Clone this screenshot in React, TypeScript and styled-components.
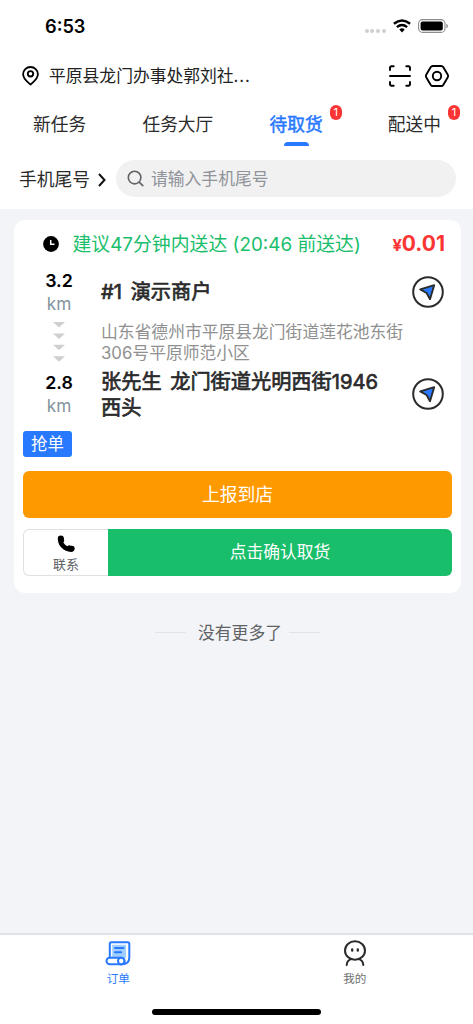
import React from 'react';
import styled, { createGlobalStyle } from 'styled-components';

const GlobalStyle = createGlobalStyle`
  *, *::before, *::after { box-sizing: border-box; }
  body {
    margin: 0;
    background: #f3f4f7;
    font-family: Inter, "Noto Sans CJK SC", sans-serif;
    color: #2b2b2b;
  }
  svg { display: block; flex: none; }
  button { font: inherit; border: 0; padding: 0; background: none; color: inherit; }
`;

const Screen = styled.div`
  display: flex;
  flex-direction: column;
  width: 473px;
  height: 1024px;
  overflow: hidden;
  background: #f3f4f7;
`;

const Header = styled.header`
  flex: none;
  height: 209px;
  background: #fff;
`;

const StatusBar = styled.div`
  display: flex;
  align-items: center;
  justify-content: space-between;
  height: 52px;
  padding: 0 24px 0 45px;
`;

const Clock = styled.span`
  font-size: 18.2px;
  font-weight: 600;
  color: #000;
`;

const StatusIcons = styled.div`
  display: flex;
  align-items: center;
  gap: 7px;
`;

const SignalDots = styled.div`
  display: flex;
  gap: 1.8px;
  padding-top: 9px;
  i { width: 4px; height: 4px; border-radius: 50%; background: #cfcfcf; }
`;

const LocationBar = styled.div`
  display: flex;
  align-items: center;
  height: 48px;
  padding: 0 23px 0 22px;
  color: #000;
`;

const Address = styled.span`
  flex: 1;
  margin-left: 10px;
  font-size: 16.8px;
  line-height: 24px;
  color: #222;
`;

const Ellipsis = styled.span`
  letter-spacing: 0.9px;
`;

const HeaderActions = styled.div`
  display: flex;
  align-items: center;
  gap: 12px;
`;

const Tabs = styled.nav`
  display: flex;
  height: 52px;
  margin: 0 -0.5px 0 0.5px;
`;

const Tab = styled.button<{ $active?: boolean }>`
  position: relative;
  flex: 1;
  display: flex;
  flex-direction: column;
  align-items: center;
  padding-top: 12px;
  font-size: 17.7px;
  line-height: 26px;
  -webkit-text-stroke: ${p => (p.$active ? '0.5px' : '0')};
  color: ${p => (p.$active ? '#2979ff' : '#2b2b2b')};
`;

const ActiveMark = styled.i`
  width: 25px;
  height: 4px;
  margin-top: 4px;
  border-radius: 4px 4px 0 0;
  background: #2979ff;
`;

const Badge = styled.span`
  position: absolute;
  top: 5px;
  left: 92.5px;
  width: 12.5px;
  height: 15px;
  border-radius: 7px;
  background: #fa3534;
  color: #fff;
  font-size: 11px;
  line-height: 15px;
  text-align: center;
  -webkit-text-stroke: 0;
`;

const SearchRow = styled.div`
  display: flex;
  align-items: center;
  height: 53px;
  padding: 0 17px 0 19px;
`;

const SearchKind = styled.button`
  display: flex;
  align-items: center;
  gap: 8px;
  width: 97px;
  padding-top: 2px;
  font-size: 17.8px;
  line-height: 26px;
  color: #2b2b2b;
`;

const SearchField = styled.div`
  flex: 1;
  display: flex;
  align-items: center;
  gap: 7px;
  height: 37px;
  padding-left: 11px;
  border-radius: 19px;
  background: #f1f1f1;
  font-size: 16.8px;
  line-height: 24px;
  color: #909399;
`;

const List = styled.main`
  flex: 1;
  padding: 11px 12px 0 14px;
`;

const Card = styled.section`
  height: 373px;
  padding: 10px 9px 0;
  border-radius: 11px;
  background: #fff;
`;

const Deadline = styled.div`
  display: flex;
  align-items: center;
  height: 29px;
  padding: 0 7px 0 20px;
  svg { margin-bottom: 1px; }
`;

const DeadlineText = styled.span`
  flex: 1;
  margin-left: 13.5px;
  white-space: nowrap;
  font-size: 18.85px;
  line-height: 28px;
  color: #19be6b;
`;

const Price = styled.span`
  font-size: 21px;
  font-weight: 700;
  line-height: 28px;
  color: #fa3534;
  small { font-size: 16.5px; }
`;

const Stop = styled.div<{ $height: number }>`
  display: flex;
  align-items: flex-start;
  height: ${p => p.$height}px;
  padding-right: 8px;
`;

const Distance = styled.div<{ $top: number }>`
  display: flex;
  flex-direction: column;
  align-items: center;
  width: 72px;
  margin-right: 6px;
  padding-top: ${p => p.$top}px;
`;

const Kilometers = styled.strong`
  font-size: 17.8px;
  font-weight: 600;
  line-height: 23px;
  color: #000;
`;

const Unit = styled.span`
  font-size: 17.3px;
  line-height: 23px;
  color: #82939e;
`;

const Arrows = styled.div`
  margin-top: 7px;
`;

const StopInfo = styled.div<{ $top: number }>`
  flex: 1;
  padding-top: ${p => p.$top}px;
  white-space: nowrap;
`;

const StopName = styled.div`
  font-size: 20.2px;
  line-height: 26px;
  word-spacing: 3px;
  -webkit-text-stroke: 0.7px #2b2b2b;
  color: #2b2b2b;
`;

const StopAddress = styled.div`
  margin-top: 17px;
  font-size: 16.8px;
  line-height: 21px;
  color: #909090;
`;

const Navigate = styled.button`
  width: 32px;
  margin: 17px 0 0 -60px;
`;

const Tag = styled.div`
  width: 49px;
  height: 26px;
  border-radius: 3px;
  background: #2979ff;
  color: #fff;
  font-size: 16.5px;
  line-height: 26px;
  text-align: center;
`;

const ReportButton = styled.button`
  display: block;
  width: 100%;
  height: 47px;
  margin-top: 14px;
  border-radius: 6px;
  background: #ff9900;
  color: #fff;
  font-size: 17.8px;
  line-height: 46px;
`;

const ActionRow = styled.div`
  display: flex;
  height: 47px;
  margin-top: 11px;
`;

const ContactButton = styled.button`
  display: flex;
  flex-direction: column;
  align-items: center;
  gap: 1.5px;
  width: 85px;
  padding-top: 5px;
  border: 1px solid #e0e1e3;
  border-right: 0;
  border-radius: 6px 0 0 6px;
  color: #606266;
  font-size: 12.9px;
  line-height: 20px;
`;

const ConfirmButton = styled.button`
  flex: 1;
  border-radius: 0 6px 6px 0;
  background: #19be6b;
  color: #fff;
  font-size: 16.8px;
  line-height: 44px;
  padding-bottom: 2px;
`;

const EndNote = styled.div`
  display: flex;
  align-items: center;
  justify-content: center;
  height: 24px;
  margin-top: 27px;
  font-size: 16.8px;
  color: #606266;
  &::before, &::after {
    content: '';
    width: 31px;
    height: 1px;
    background: #e2e3e6;
  }
  &::before { margin-right: 12px; }
  &::after { margin-left: 7px; }
`;

const BottomBar = styled.footer`
  flex: none;
  display: flex;
  flex-wrap: wrap;
  align-content: flex-start;
  justify-content: center;
  height: 91px;
  border-top: 2px solid #e0e1e4;
  background: #fff;
`;

const BottomItem = styled.button<{ $active?: boolean }>`
  display: flex;
  flex-direction: column;
  align-items: center;
  width: 50%;
  height: 73.5px;
  padding-top: 5px;
  font-size: 11.6px;
  line-height: 20px;
  color: ${p => (p.$active ? '#2979ff' : '#707070')};
  svg { margin-bottom: 2.5px; }
`;

const HomeIndicator = styled.i`
  width: 169px;
  height: 6px;
  border-radius: 3px;
  background: #000;
`;

const NavigateIcon = () => (
  <svg width="32" height="32" viewBox="0 0 32 32" fill="none">
    <circle cx="16" cy="16" r="14.8" stroke="#2b2b2b" strokeWidth="2" />
    <path d="M8.2 13.4 L22.2 9.2 L18 23.200 L14.600 17 Z" fill="#2979ff" stroke="#2b2b2b" strokeWidth="1.900" strokeLinejoin="round" />
  </svg>
);

const tabs = [
  { label: '新任务' },
  { label: '任务大厅' },
  { label: '待取货', badge: 1, active: true },
  { label: '配送中', badge: 1 },
];

export default function App() {
  return (
    <Screen>
      <GlobalStyle />
      <Header>
        <StatusBar>
          <Clock>6:53</Clock>
          <StatusIcons>
            <SignalDots><i /><i /><i /><i /></SignalDots>
            <svg width="18" height="14" viewBox="0 0 18 14" fill="none" stroke="#000" strokeWidth="2.4">
              <path d="M.9 4.8 Q9 -1.8 17.1 4.8" />
              <path d="M3.9 8.2 Q9 3.9 14.1 8.2" />
              <path d="M6.3 10.5 Q9 8.2 11.7 10.5 L9 13.4 Z" fill="#000" stroke="none" />
            </svg>
            <svg width="31" height="14" viewBox="0 0 31 14" fill="none">
              <rect x=".6" y=".6" width="26.4" height="12.8" rx="4" stroke="#8c8c8c" strokeWidth="1.1" />
              <rect x="2.6" y="2.4" width="22.2" height="9.2" rx="2" fill="#000" />
              <path d="M28.4 4.8 Q30 5.5 30 7 Q30 8.5 28.4 9.2 Z" fill="#8c8c8c" />
            </svg>
          </StatusIcons>
        </StatusBar>
        <LocationBar>
          <svg width="17" height="20" viewBox="0 0 17 20" fill="none" stroke="#000" strokeWidth="1.8">
            <path d="M8.5 18.6 C6 16 1.1 13 1.1 8.2 A7.4 7.2 0 0 1 15.9 8.2 C15.9 13 11 16 8.5 18.6 Z" strokeLinejoin="round" />
            <circle cx="8.5" cy="7.8" r="2.7" />
          </svg>
          <Address>平原县龙门办事处郭刘社<Ellipsis>...</Ellipsis></Address>
          <HeaderActions>
            <svg width="24" height="24" viewBox="0 0 24 24" fill="none" stroke="#000" strokeWidth="1.9" strokeLinecap="round">
              <path d="M2 6 V4 Q2 2.3 3.7 2.3 H5.7 M18.3 2.3 H20.3 Q22 2.3 22 4 V6 M2 18 V20 Q2 21.7 3.7 21.7 H5.7 M18.3 21.7 H20.3 Q22 21.7 22 20 V18 M2 12 H22" />
            </svg>
            <svg width="26" height="24" viewBox="0 0 26 24" fill="none" stroke="#000" strokeWidth="1.9" strokeLinejoin="round">
              <path d="M8.8 2 H17.2 Q18.5 2 19.2 3.1 L23.8 10.8 Q24.5 12 23.8 13.2 L19.2 20.9 Q18.5 22 17.2 22 H8.8 Q7.5 22 6.8 20.9 L2.2 13.2 Q1.5 12 2.2 10.8 L6.8 3.1 Q7.5 2 8.8 2 Z" />
              <circle cx="13" cy="12" r="4.2" />
            </svg>
          </HeaderActions>
        </LocationBar>
        <Tabs>
          {tabs.map(t => (
            <Tab key={t.label} $active={t.active}>
              {t.label}
              {t.active && <ActiveMark />}
              {t.badge && <Badge>{t.badge}</Badge>}
            </Tab>
          ))}
        </Tabs>
        <SearchRow>
          <SearchKind>
            手机尾号
            <svg width="8" height="14" viewBox="0 0 8 14" fill="none" stroke="#111" strokeWidth="2">
              <path d="M1 1 L6.5 7 L1 13" />
            </svg>
          </SearchKind>
          <SearchField>
            <svg width="17" height="17" viewBox="0 0 17 17" fill="none" stroke="#606266" strokeWidth="1.6" strokeLinecap="round">
              <circle cx="7.6" cy="7.6" r="6.3" />
              <path d="M12.2 12.2 L15.8 15.6" />
            </svg>
            请输入手机尾号
          </SearchField>
        </SearchRow>
      </Header>

      <List>
        <Card>
          <Deadline>
            <svg width="16" height="16" viewBox="0 0 16 16" fill="none">
              <circle cx="8" cy="8" r="7.9" fill="#000" />
              <path d="M7.7 4 V8.3 H11.5" stroke="#fff" strokeWidth="1.5" />
            </svg>
            <DeadlineText>建议47分钟内送达 (20:46 前送达)</DeadlineText>
            <Price><small>¥</small>0.01</Price>
          </Deadline>
          <Stop $height={102}>
            <Distance $top={9.5}>
              <Kilometers>3.2</Kilometers>
              <Unit>km</Unit>
              <Arrows>
                <svg width="12" height="41" viewBox="0 0 12 41" fill="#cfcfcf">
                  <path d="M0 0 H12 L6 5.5 Z M0 11.4 H12 L6 16.9 Z M0 22.8 H12 L6 28.3 Z M0 34.2 H12 L6 39.7 Z" />
                </svg>
              </Arrows>
            </Distance>
            <StopInfo $top={20}>
              <StopName>#1 演示商户</StopName>
              <StopAddress>山东省德州市平原县龙门街道莲花池东街<br />306号平原师范小区</StopAddress>
            </StopInfo>
            <Navigate><NavigateIcon /></Navigate>
          </Stop>
          <Stop $height={70}>
            <Distance $top={10}>
              <Kilometers>2.8</Kilometers>
              <Unit>km</Unit>
            </Distance>
            <StopInfo $top={8}>
              <StopName>张先生 龙门街道光明西街1946<br />西头</StopName>
            </StopInfo>
            <Navigate><NavigateIcon /></Navigate>
          </Stop>
          <Tag>抢单</Tag>
          <ReportButton>上报到店</ReportButton>
          <ActionRow>
            <ContactButton>
              <svg width="18" height="18" viewBox="0 0 18 18" fill="#000">
                <path d="M.8 3.4 Q.8 .6 3.8 .6 Q6.6 .6 6.8 2.6 L7.2 5.4 Q7.3 6.7 6.3 7.6 Q7.7 9.9 10.3 11.3 Q11.4 10.2 12.8 10.4 L16 10.9 Q17.8 11.3 17.7 13.5 Q17.5 16.9 14 16.9 Q8.5 16.9 4.6 12.8 Q.8 8.8 .8 3.4 Z" />
              </svg>
              联系
            </ContactButton>
            <ConfirmButton>点击确认取货</ConfirmButton>
          </ActionRow>
        </Card>
        <EndNote>没有更多了</EndNote>
      </List>

      <BottomBar>
        <BottomItem $active>
          <svg width="26" height="26" viewBox="0 0 26 26" fill="none" stroke="#2979ff" strokeWidth="2" strokeLinecap="round" strokeLinejoin="round">
            <path d="M4.8 17 V3.7 Q4.8 2.2 6.3 2.2 H22.8 Q24.3 2.2 24.3 3.7 V17.5 Q24.3 24.2 17 24.2 H15" fill="#fff" />
            <path d="M7.2 4.8 H21 V18 H7.2 Z" fill="#a0cfff" stroke="none" />
            <path d="M10 8 H18.5 M10 12.2 H16.2" />
            <rect x="1.5" y="17.8" width="18" height="6.4" rx="3.2" fill="#fff" />
            <circle cx="16.2" cy="21" r="3.2" fill="#fff" />
          </svg>
          订单
        </BottomItem>
        <BottomItem>
          <svg width="26" height="26" viewBox="0 0 26 26" fill="none" stroke="#2b2b2b" strokeWidth="2" strokeLinecap="round">
            <ellipse cx="13" cy="10.5" rx="10" ry="9.3" />
            <path d="M4.7 25 Q5 20.5 8.5 19.4 M21.3 25 Q21 20.5 17.5 19.4" />
            <path d="M10.2 9.3 V10.7 M15.8 9.3 V10.7" strokeWidth="2.3" />
          </svg>
          我的
        </BottomItem>
        <HomeIndicator />
      </BottomBar>
    </Screen>
  );
}
